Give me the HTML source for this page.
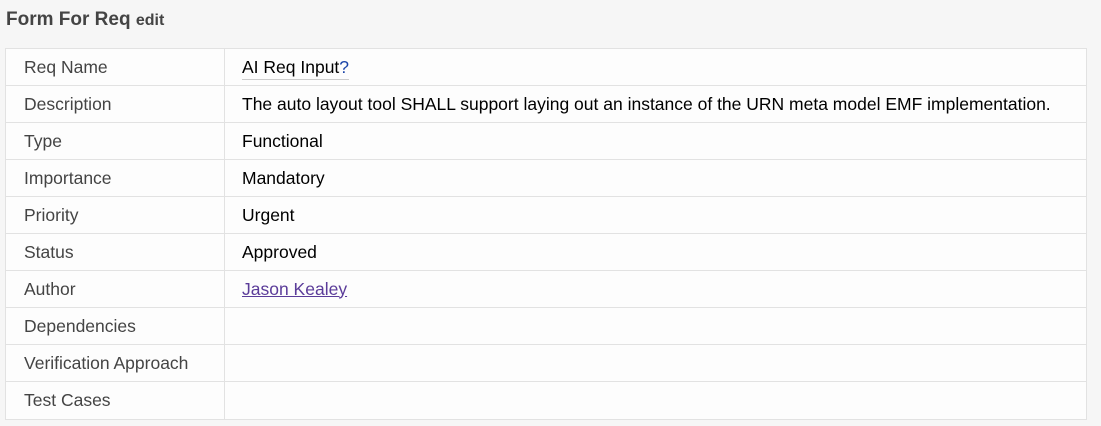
<!DOCTYPE html>
<html><head><meta charset="utf-8"><style>
html,body{margin:0;padding:0;background:#f6f6f6;width:1101px;height:426px;overflow:hidden;font-family:"Liberation Sans",Arial,sans-serif;}
h1{position:absolute;left:6px;top:9px;margin:0;font-size:19px;font-weight:bold;color:#444;}
h1 small{font-size:16px;}
table{position:absolute;left:5px;top:48px;width:1082px;border-collapse:collapse;background:#fdfdfd;}
td{border:1px solid #e2e2e2;height:36px;padding:0;font-size:17.5px;vertical-align:middle;}
tr.last td{height:37px;}
td.l{width:200px;padding-left:18px;color:#444;}
td.v{padding-left:17px;color:#000;}
.q{border-bottom:1px solid #ccc;padding-bottom:2px;}
.q span{color:#1a44a8;}
a{color:#5b3c99;text-decoration:underline;}
</style></head><body>
<h1>Form For Req <small>edit</small></h1>
<table>
<tr><td class="l">Req Name</td><td class="v"><span class="q">AI Req Input<span>?</span></span></td></tr>
<tr><td class="l">Description</td><td class="v">The auto layout tool SHALL support laying out an instance of the URN meta model EMF implementation.</td></tr>
<tr><td class="l">Type</td><td class="v">Functional</td></tr>
<tr><td class="l">Importance</td><td class="v">Mandatory</td></tr>
<tr><td class="l">Priority</td><td class="v">Urgent</td></tr>
<tr><td class="l">Status</td><td class="v">Approved</td></tr>
<tr><td class="l">Author</td><td class="v"><a>Jason Kealey</a></td></tr>
<tr><td class="l">Dependencies</td><td class="v"></td></tr>
<tr><td class="l">Verification Approach</td><td class="v"></td></tr>
<tr class="last"><td class="l">Test Cases</td><td class="v"></td></tr>
</table>
</body></html>
